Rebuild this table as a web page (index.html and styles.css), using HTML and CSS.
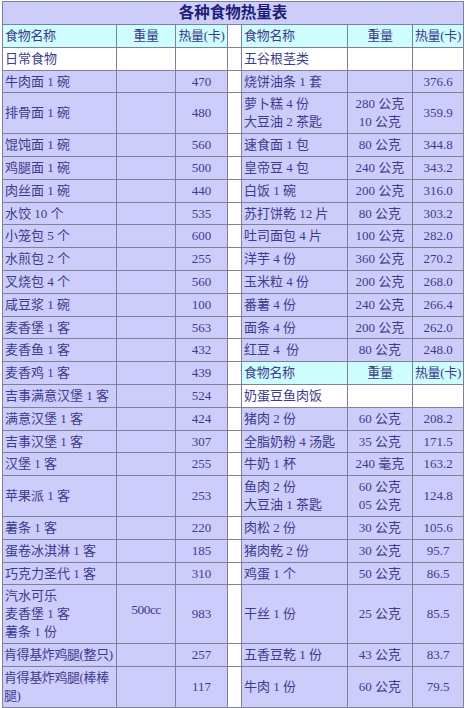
FILE: index.html
```html
<!DOCTYPE html>
<html lang="zh-CN">
<head>
<meta charset="utf-8">
<title>各种食物热量表</title>
<link rel="stylesheet" href="styles.css">
</head>
<body>
<table class="cal">
  <colgroup>
    <col class="c-name-l"><col class="c-wt-l"><col class="c-cal-l"><col class="c-gap"><col class="c-name-r"><col class="c-wt-r"><col class="c-cal-r">
  </colgroup>
  <tr class="title"><td colspan="7">各种食物热量表</td></tr>
  <tr>
    <td class="hd name">食物名称</td><td class="hd">重量</td><td class="hd">热量(卡)</td><td class="gap"></td>
    <td class="hd name">食物名称</td><td class="hd">重量</td><td class="hd">热量(卡)</td>
  </tr>
  <tr>
    <td class="wh name">日常食物</td><td class="wh"></td><td class="wh"></td><td class="gap"></td>
    <td class="wh name">五谷根茎类</td><td class="wh"></td><td class="wh"></td>
  </tr>
  <tr><td class="name">牛肉面 1 碗</td><td></td><td>470</td><td class="gap"></td><td class="name">烧饼油条 1 套</td><td></td><td>376.6</td></tr>
  <tr><td class="name">排骨面 1 碗</td><td></td><td>480</td><td class="gap"></td><td class="name">萝卜糕 4 份<br>大豆油 2 茶匙</td><td>280 公克<br>10 公克</td><td>359.9</td></tr>
  <tr><td class="name">馄饨面 1 碗</td><td></td><td>560</td><td class="gap"></td><td class="name">速食面 1 包</td><td>80 公克</td><td>344.8</td></tr>
  <tr><td class="name">鸡腿面 1 碗</td><td></td><td>500</td><td class="gap"></td><td class="name">皇帝豆 4 包</td><td>240 公克</td><td>343.2</td></tr>
  <tr><td class="name">肉丝面 1 碗</td><td></td><td>440</td><td class="gap"></td><td class="name">白饭 1 碗</td><td>200 公克</td><td>316.0</td></tr>
  <tr><td class="name">水饺 10 个</td><td></td><td>535</td><td class="gap"></td><td class="name">苏打饼乾 12 片</td><td>80 公克</td><td>303.2</td></tr>
  <tr><td class="name">小笼包 5 个</td><td></td><td>600</td><td class="gap"></td><td class="name">吐司面包 4 片</td><td>100 公克</td><td>282.0</td></tr>
  <tr><td class="name">水煎包 2 个</td><td></td><td>255</td><td class="gap"></td><td class="name">洋芋 4 份</td><td>360 公克</td><td>270.2</td></tr>
  <tr><td class="name">叉烧包 4 个</td><td></td><td>560</td><td class="gap"></td><td class="name">玉米粒 4 份</td><td>200 公克</td><td>268.0</td></tr>
  <tr><td class="name">咸豆浆 1 碗</td><td></td><td>100</td><td class="gap"></td><td class="name">番薯 4 份</td><td>240 公克</td><td>266.4</td></tr>
  <tr><td class="name">麦香堡 1 客</td><td></td><td>563</td><td class="gap"></td><td class="name">面条 4 份</td><td>200 公克</td><td>262.0</td></tr>
  <tr><td class="name">麦香鱼 1 客</td><td></td><td>432</td><td class="gap"></td><td class="name">红豆 4 &nbsp;份</td><td>80 公克</td><td>248.0</td></tr>
  <tr><td class="name">麦香鸡 1 客</td><td></td><td>439</td><td class="gap"></td><td class="hd name">食物名称</td><td class="hd">重量</td><td class="hd">热量(卡)</td></tr>
  <tr><td class="name">吉事满意汉堡 1 客</td><td></td><td>524</td><td class="gap"></td><td class="wh name">奶蛋豆鱼肉饭</td><td class="wh"></td><td class="wh"></td></tr>
  <tr><td class="name">满意汉堡 1 客</td><td></td><td>424</td><td class="gap"></td><td class="name">猪肉 2 份</td><td>60 公克</td><td>208.2</td></tr>
  <tr><td class="name">吉事汉堡 1 客</td><td></td><td>307</td><td class="gap"></td><td class="name">全脂奶粉 4 汤匙</td><td>35 公克</td><td>171.5</td></tr>
  <tr><td class="name">汉堡 1 客</td><td></td><td>255</td><td class="gap"></td><td class="name">牛奶 1 杯</td><td>240 毫克</td><td>163.2</td></tr>
  <tr><td class="name">苹果派 1 客</td><td></td><td>253</td><td class="gap"></td><td class="name">鱼肉 2 份<br>大豆油 1 茶匙</td><td>60 公克<br>05 公克</td><td>124.8</td></tr>
  <tr><td class="name">薯条 1 客</td><td></td><td>220</td><td class="gap"></td><td class="name">肉松 2 份</td><td>30 公克</td><td>105.6</td></tr>
  <tr><td class="name">蛋卷冰淇淋 1 客</td><td></td><td>185</td><td class="gap"></td><td class="name">猪肉乾 2 份</td><td>30 公克</td><td>95.7</td></tr>
  <tr><td class="name">巧克力圣代 1 客</td><td></td><td>310</td><td class="gap"></td><td class="name">鸡蛋 1 个</td><td>50 公克</td><td>86.5</td></tr>
  <tr><td class="name">汽水可乐<br>麦香堡 1 客<br>薯条 1 份</td><td class="cc">500cc</td><td>983</td><td class="gap"></td><td class="name">干丝 1 份</td><td>25 公克</td><td>85.5</td></tr>
  <tr><td class="name tight">肯得基炸鸡腿(整只)</td><td></td><td>257</td><td class="gap"></td><td class="name">五香豆乾 1 份</td><td>43 公克</td><td>83.7</td></tr>
  <tr><td class="name tight">肯得基炸鸡腿(棒棒<br>腿)</td><td></td><td>117</td><td class="gap"></td><td class="name">牛肉 1 份</td><td>60 公克</td><td>79.5</td></tr>
</table>
</body>
</html>
```

FILE: styles.css
```css
html, body {
  margin: 0;
  padding: 0;
  background: #ffffff;
}

body {
  padding: 1px 0 0 2px;
  font-family: "Liberation Serif", "Noto Sans CJK SC", serif;
  font-size: 13px;
  color: #3c3c8c;
}

.cal {
  border-collapse: collapse;
  table-layout: fixed;
  width: 461px;
}

.c-name-l { width: 114px; }
.c-wt-l { width: 59px; }
.c-cal-l { width: 52px; }
.c-gap { width: 14px; }
.c-name-r { width: 106px; }
.c-wt-r { width: 65px; }
.c-cal-r { width: 51px; }

.cal td {
  border: 1px solid #80809a;
  background: #cdcdfb;
  padding: 2px 1px 1.8px;
  line-height: 18px;
  text-align: center;
  vertical-align: middle;
  white-space: nowrap;
  overflow: hidden;
}

.cal td.name {
  text-align: left;
  padding-left: 2px;
}

.cal td.tight {
  padding-left: 1px;
  letter-spacing: -0.4px;
}

.cal td.hd {
  background: #cdfdfd;
  letter-spacing: -0.3px;
}

.cal td.wh,
.cal td.gap {
  background: #ffffff;
}

.cal td.cc {
  padding-bottom: 10px;
  font-size: 13.5px;
  letter-spacing: -0.5px;
}

.title td {
  height: 22px;
  padding: 0;
  line-height: 20px;
  font-size: 15.5px;
  font-weight: bold;
  color: #1e1e78;
  background: #cdcdfb;
  text-align: center;
}
```
